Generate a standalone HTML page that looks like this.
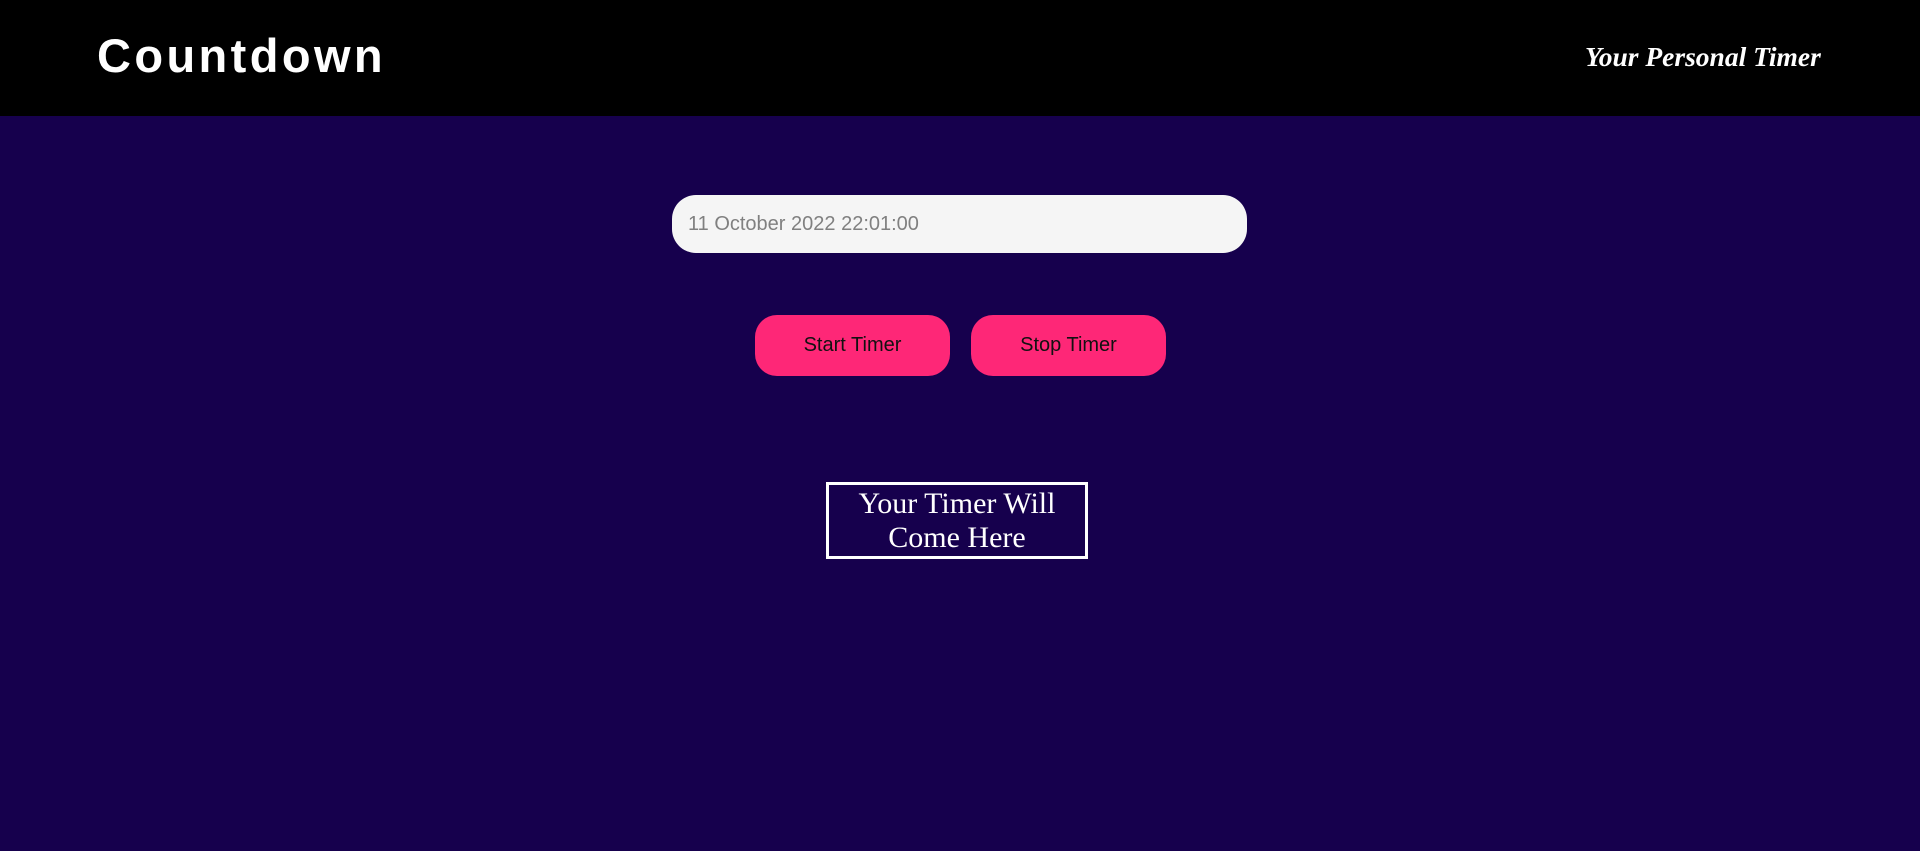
<!DOCTYPE html>
<html><head><meta charset="utf-8"><style>
body{margin:0;width:1920px;height:851px;background:#16004d;overflow:hidden;font-family:"Liberation Sans",Arial,sans-serif}
.hdr{position:absolute;left:0;top:0;width:1920px;height:116px;background:#000}
.t1{position:absolute;left:97px;top:26px;font-size:47px;font-weight:bold;letter-spacing:3.4px;color:#fff;line-height:60px}
.t2{position:absolute;left:1585px;top:41px;font:italic bold 27.5px "Liberation Serif",serif;color:#fff;line-height:32px}
.inp{position:absolute;left:672px;top:195px;width:575px;height:58px;border-radius:24px;background:#f5f5f5;box-sizing:border-box;padding-left:16px;font-size:20px;line-height:58px;color:#808080}
.btn{position:absolute;top:315px;width:195px;height:61px;border-radius:22px;background:#fe2777;color:#111;font-size:20px;line-height:61px;text-align:center}
.box{position:absolute;left:826px;top:482px;width:262px;height:77px;box-sizing:border-box;border:3px solid #fff;color:#fff;font:30px/34px "Liberation Serif",serif;text-align:center;padding-top:2px}
</style></head><body>
<div class="hdr"><div class="t1">Countdown</div><div class="t2">Your Personal Timer</div></div>
<div class="inp">11 October 2022 22:01:00</div>
<div class="btn" style="left:755px">Start Timer</div>
<div class="btn" style="left:971px">Stop Timer</div>
<div class="box">Your Timer Will<br>Come Here</div>
</body></html>
